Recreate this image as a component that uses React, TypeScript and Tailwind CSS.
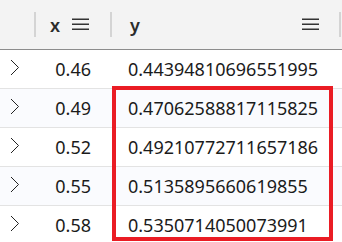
import React from "react";

const rows = [
  ["0.46", "0.44394810696551995"],
  ["0.49", "0.47062588817115825"],
  ["0.52", "0.49210772711657186"],
  ["0.55", "0.5135895660619855"],
  ["0.58", "0.5350714050073991"],
];

function MenuIcon() {
  return (
    <svg width="17" height="13" viewBox="0 0 17 13" className="block">
      <path d="M0 1.25H17M0 6.25H17M0 11.25H17" stroke="#333" strokeWidth="1.5" />
    </svg>
  );
}

function Chevron() {
  return (
    <svg width="10" height="17" viewBox="0 0 10 17" className="block">
      <path d="M1 1L8.5 8.5L1 16" fill="none" stroke="#222" strokeWidth="1" />
    </svg>
  );
}

export default function App() {
  return (
    <div
      className="relative w-[342px] h-[242px] overflow-hidden bg-white text-[#1b1b1b]"
      style={{ fontFamily: '"Noto Sans", "Open Sans", sans-serif' }}
    >
      <div className="flex h-[50px] bg-[#f3f3f3] border-b border-[#8c8c8c]">
        <div className="w-[34px]" />
        <div className="flex items-center w-[2px]">
          <div className="w-[2px] h-[25px] bg-[#d4d4d4]" />
        </div>
        <div className="flex items-center w-[74px] pl-[14px] gap-[12px]">
          <span className="text-[18px] font-semibold leading-none text-[#2b2b2b]">x</span>
          <MenuIcon />
        </div>
        <div className="flex items-center w-[2px]">
          <div className="w-[2px] h-[25px] bg-[#d4d4d4]" />
        </div>
        <div className="flex items-center flex-1 pl-[18px] pr-[20px]">
          <span className="text-[18px] font-semibold leading-none text-[#2b2b2b]">y</span>
          <div className="ml-auto">
            <MenuIcon />
          </div>
        </div>
        <div className="flex items-center w-[2px] mr-[1px]">
          <div className="w-[2px] h-[25px] bg-[#d4d4d4]" />
        </div>
      </div>
      {rows.map(([x, y], i) => (
        <div
          key={i}
          className={`flex h-[39px] border-b border-[#e3e3e3] ${i % 2 === 1 ? "bg-[#fafbfe]" : "bg-white"}`}
        >
          <div className="w-[36px] flex items-center pl-[10px] pb-[3px]">
            <Chevron />
          </div>
          <div className="w-[74px] flex items-center justify-end pr-[19px] text-[18px]">{x}</div>
          <div className="flex-1 flex items-center pl-[18px] text-[18px]">{y}</div>
        </div>
      ))}
      <div className="absolute left-[112px] top-[86px] w-[221px] h-[155px] border-4 border-[#ea1c24]" />
    </div>
  );
}
